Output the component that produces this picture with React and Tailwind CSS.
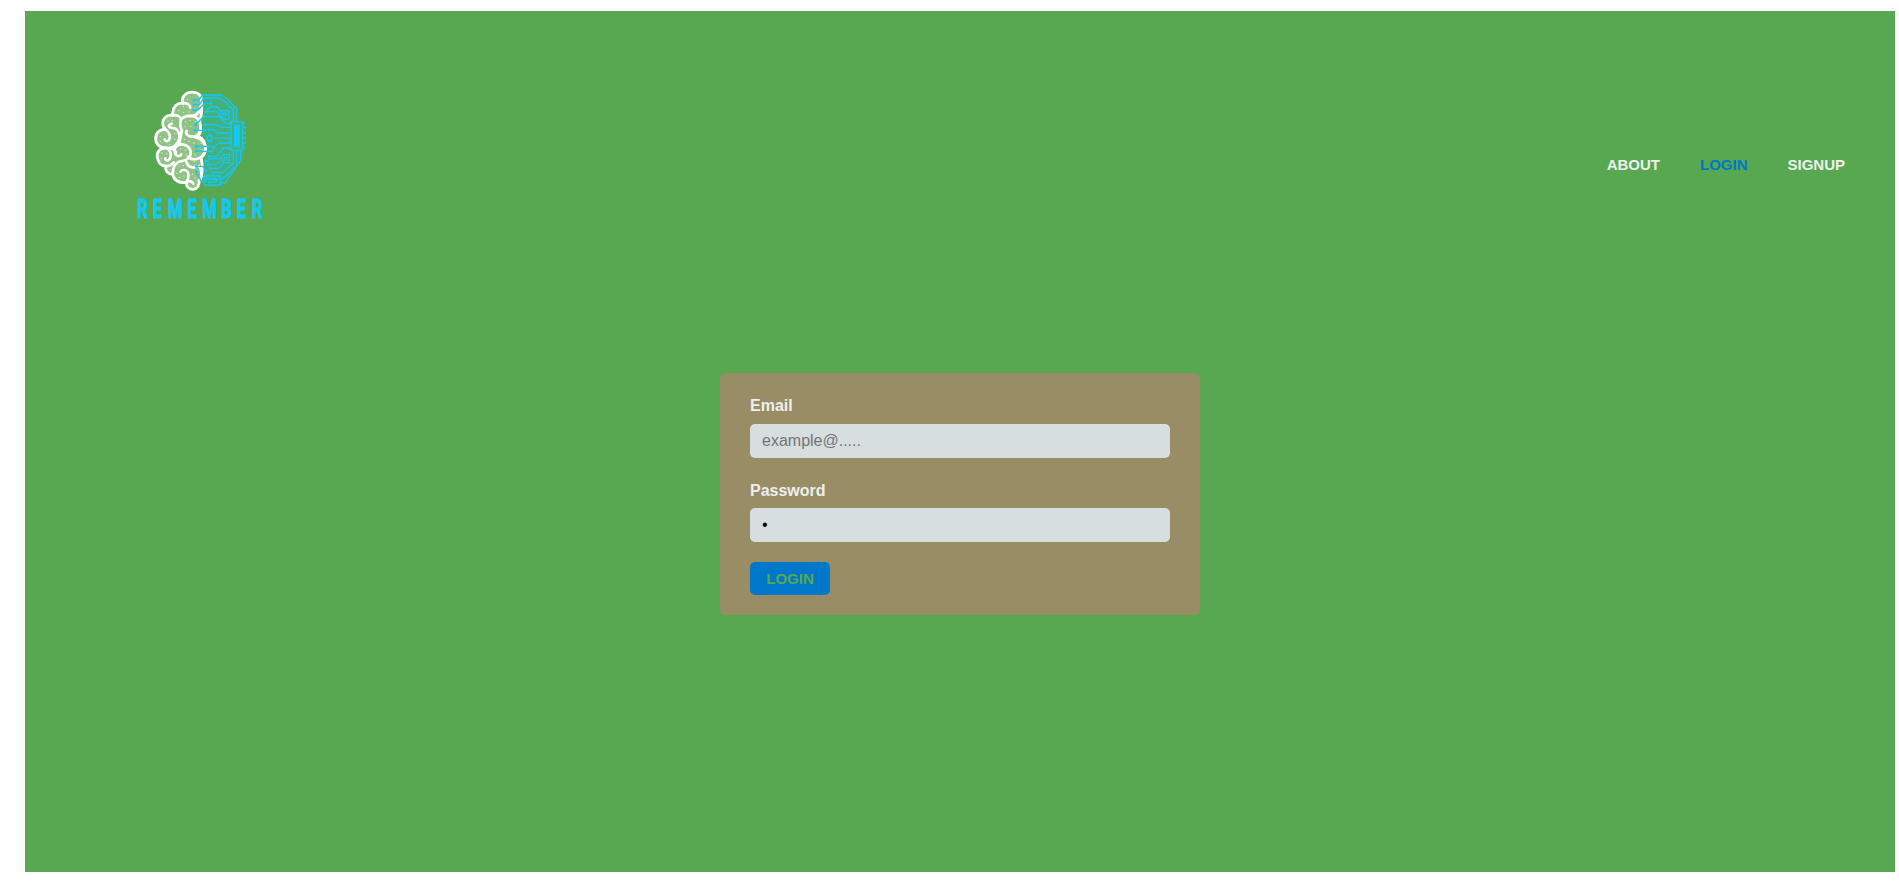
const BLUE = '#14c8f5';

const lobes = [
  'M243 50C233 33 203 31 190 50C186 57 186 64 189 70C174 66 157 80 158 106C139 103 125 118 129 136C131 142 133 146 137 149C119 146 106 160 107 177C107 193 121 205 139 204C120 203 109 216 112 232C114 247 124 257 136 258C136 273 144 283 158 283C161 300 177 311 199 307C198 320 208 329 220 328C232 327 239 315 237 303C247 291 250 262 243 232C254 226 259 208 255 194C251 179 241 171 231 170C243 162 246 141 238 124C246 110 247 82 243 50Z',
];

const folds = [
  'M189 70C200 67 210 75 211 83M158 106C170 103 181 109 183 118C191 110 201 107 211 108',
  'M211 108C230 107 242 95 243 75',
  'M211 108C229 108 239 119 241 134C245 153 236 170 219 170C204 171 195 160 200 153',
  'M155 131C143 135 144 144 158 144C173 144 182 162 177 179C171 198 155 205 139 204C150 204 163 208 168 216',
  'M137 149C150 158 153 172 147 180C142 186 134 184 134 178',
  'M183 118C179 133 182 145 186 152C182 165 180 181 178 194C166 198 161 209 165 219C168 230 181 231 184 223',
  'M178 194C195 190 210 201 212 215C214 230 202 241 187 243C169 245 158 259 158 283',
  'M219 170C237 171 255 185 257 204C257 224 243 235 230 237C218 239 208 235 204 230',
  'M139 204C152 209 157 226 148 238C142 244 134 241 136 235M136 258C146 260 156 253 161 247',
  'M181 275C186 268 199 268 204 277C208 288 202 303 199 307M199 307C207 301 216 304 220 311',
  'M199 246C205 264 222 266 229 258M237 258C247 271 247 292 237 303',
];

const dots = [
  [203, 58], [176, 91], [191, 97], [207, 96], [190, 80], [224, 86],
  [144, 123], [157, 121], [121, 170], [121, 184], [164, 161], [164, 178], [149, 193],
  [197, 125], [210, 121], [226, 124], [196, 139], [212, 139], [224, 151], [193, 178], [207, 184], [222, 189], [243, 190],
  [126, 219], [140, 222], [124, 235], [150, 269], [182, 207], [195, 210], [198, 224], [225, 224],
  [177, 259], [190, 256], [224, 244], [171, 280], [178, 292], [192, 288], [217, 282], [225, 294],
];

const traces = [
  'M222 60H236L248 45H304L318 54L350 86V124',
  'M222 74H238L252 54H298L313 63L340 89V124',
  'M222 90H233L255 70H273',
  'M264 86L274 81H292L302 92',
  'M258 95H290L298 105H303',
  'M227 134L250 110H298L318 130H333',
  'M254 134H290L304 142H333',
  'M225 151H254',
  'M266 149H280L294 159H333',
  'M277 174H333',
  'M281 202L296 189H333',
  'M229 199H267',
  'M229 214H276',
  'M267 229H291L309 204H333',
  'M258 244L270 236H304',
  'M264 253H288L300 242',
  'M271 265H297L312 250',
  'M229 259H248L258 272',
  'M229 275L244 305H252',
  'M275 277H310L340 249V211',
  'M301 295H310L350 258V211',
  'M301 309H316L362 240V211',
  'M257 306V297H284M268 307H290V295',
];

const nodes = [
  [222, 60], [222, 74], [222, 90], [273, 70], [264, 86], [258, 95], [227, 134], [254, 134], [225, 151], [254, 151], [266, 149],
  [281, 202], [229, 199], [267, 199], [229, 214], [276, 214], [267, 229], [258, 244], [264, 253], [271, 265], [229, 259], [258, 272], [229, 275], [284, 297], [268, 307],
];

function Logo() {
  return (
    <svg className="block h-[150px] w-[160px]" viewBox="0 0 480 450" role="img" aria-label="Remember">
      <path d="M244 48H302L350 88V125H368V211H361V240L314 308H240Z" fill={BLUE} opacity="0.27" />
      <g fill="#8fc285" stroke="#fff" strokeWidth="8.5" strokeLinejoin="round">
        {lobes.map((d) => (
          <path key={d} d={d} />
        ))}
      </g>
      <g fill="none" stroke="#fff" strokeWidth="8" strokeLinecap="round" strokeLinejoin="round">
        {folds.map((d) => (
          <path key={d} d={d} />
        ))}
      </g>
      <g fill="#fff" opacity="0.75">
        {dots.map(([x, y]) => (
          <circle key={`${x}-${y}`} cx={x} cy={y} r="2" />
        ))}
      </g>
      <g fill="none" stroke={BLUE} strokeWidth="4" strokeLinejoin="round">
        {traces.map((d) => (
          <path key={d} d={d} />
        ))}
        <path d="M302 92H326V117H311L302 108Z" />
        <circle cx="314" cy="104" r="5" />
        <path d="M304 232L312 223H328V248H312L304 240Z" />
        <circle cx="317" cy="236" r="5" />
        <rect x="333" y="125" width="35" height="86" />
        <path d="M368 129H376M368 143H378M368 159H378M368 174H378M368 189H378M368 204H376M326 129H333M326 206H333" strokeWidth="5" />
        <rect x="262" y="168" width="13" height="13" />
        <path d="M265 161V168M272 161V168M265 181V188M272 181V188M256 174H262" strokeWidth="3" />
        <rect x="252" y="288" width="49" height="27" />
        <path d="M257 282V288M268 282V288M279 282V288M290 282V288M299 282V288M257 315V321M268 315V321M279 315V321M290 315V321" strokeWidth="3" />
      </g>
      <g fill={BLUE}>
        <rect x="342" y="135" width="17" height="66" />
        {nodes.map(([x, y]) => (
          <circle key={`${x}-${y}`} cx={x} cy={y} r="4.5" />
        ))}
      </g>
      <text
        transform="translate(0 415) scale(0.64 1)"
        x="81 154 225 316 385 475 547 619"
        y="0"
        fill={BLUE}
        stroke={BLUE}
        strokeWidth="3"
        className="font-['Roboto',sans-serif] text-[78px] font-bold"
      >
        REMEMBER
      </text>
    </svg>
  );
}

export default function App() {
  return (
    <div className="h-[884px] bg-white pt-[11px] pr-[4px] pb-[12px] pl-[25px] font-['Liberation_Sans',Arial,sans-serif]">
      <div className="flex h-full flex-col bg-[#57a850]">
        <header className="flex h-[288px] items-start justify-between pr-[50px] pl-[95px]">
          <div className="pt-[69px]">
            <Logo />
          </div>
          <nav className="flex gap-10 pt-[145px] text-[15px] leading-[17px] font-bold text-[#eeeeee]">
            <a>ABOUT</a>
            <a className="text-[#0077c8]">LOGIN</a>
            <a>SIGNUP</a>
          </nav>
        </header>
        <main className="flex justify-center pt-[74px]">
          <form className="h-[242px] w-[480px] rounded-md bg-[#998d65] px-[30px] pt-6">
            <label className="block h-[27px] text-base leading-[18px] font-bold text-[#eeeeee]" htmlFor="email">
              Email
            </label>
            <input
              id="email"
              type="email"
              placeholder="example@....."
              className="block h-[34px] w-full rounded-[5px] bg-[#d6dee0] px-3 text-base text-black placeholder:text-[#757575]"
            />
            <label className="mt-6 block h-[26px] text-base leading-[18px] font-bold text-[#eeeeee]" htmlFor="password">
              Password
            </label>
            <input
              id="password"
              type="password"
              defaultValue="1"
              className="block h-[34px] w-full rounded-[5px] bg-[#d6dee0] px-3 pb-px text-base text-black"
            />
            <button
              type="button"
              className="mt-5 block h-[33px] w-20 rounded-[5px] bg-[#0077c8] pt-px text-[15px] font-bold text-[#57a850]"
            >
              LOGIN
            </button>
          </form>
        </main>
      </div>
    </div>
  );
}
